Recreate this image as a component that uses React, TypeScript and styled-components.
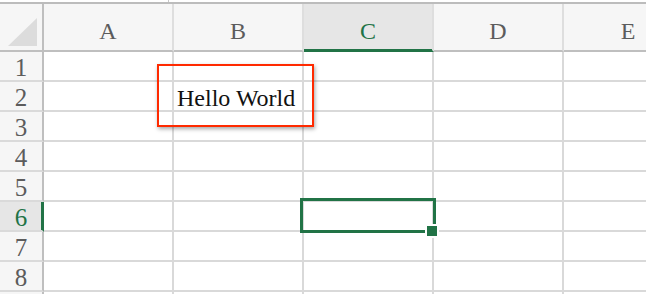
import React from 'react'
import styled, { createGlobalStyle } from 'styled-components'

const GlobalStyle = createGlobalStyle`
  html, body {
    margin: 0;
    padding: 0;
    background: #fff;
    overflow: hidden;
  }
  body {
    font-family: 'Liberation Serif', 'Times New Roman', serif;
  }
`

const Sheet = styled.div`
  position: relative;
  width: 646px;
  height: 294px;
  overflow: hidden;
`

const TopStrip = styled.div`
  height: 2px;
  background: #fff;
  border-bottom: 2px solid #bcbcbc;
  display: flex;

  .tick {
    width: 168px;
    border-right: 1px solid #c8c8c8;
  }
`

const Grid = styled.div`
  display: grid;
  grid-template-columns: 44px repeat(5, 130px);
  grid-template-rows: 48px repeat(9, 30px);
`

const Corner = styled.div`
  box-sizing: border-box;
  background: #f6f6f6;
  border-right: 2px solid #bfbfbf;
  border-bottom: 2px solid #bfbfbf;
  display: flex;
  justify-content: flex-end;
  align-items: flex-end;
  padding: 0 5px 4px 0;
`

const ColHeader = styled.div<{ $active?: boolean }>`
  box-sizing: border-box;
  background: ${(p) => (p.$active ? '#e6e6e6' : '#f6f6f6')};
  border-right: 2px solid #dedede;
  border-bottom: 2px solid ${(p) => (p.$active ? '#217346' : '#bfbfbf')};
  box-shadow: ${(p) => (p.$active ? 'inset 0 -1px 0 #217346' : 'none')};
  color: ${(p) => (p.$active ? '#217346' : '#5c5c5c')};
  font-size: 24px;
  line-height: 1;
  display: flex;
  justify-content: center;
  align-items: flex-end;
  padding-bottom: 7px;
`

const RowHeader = styled.div<{ $active?: boolean }>`
  box-sizing: border-box;
  background: ${(p) => (p.$active ? '#e6e6e6' : '#f6f6f6')};
  border-right: 2px solid ${(p) => (p.$active ? '#217346' : '#bfbfbf')};
  border-bottom: 2px solid #dadada;
  box-shadow: ${(p) => (p.$active ? 'inset -1px 0 0 #217346' : 'none')};
  color: ${(p) => (p.$active ? '#217346' : '#5c5c5c')};
  font-size: 25px;
  line-height: 1;
  display: flex;
  justify-content: center;
  align-items: flex-end;
`

const Cell = styled.div`
  box-sizing: border-box;
  border-right: 2px solid #d9d9d9;
  border-bottom: 2px solid #d9d9d9;
  color: #111;
  font-size: 24px;
  line-height: 1;
  display: flex;
  align-items: flex-end;
  padding-left: 3px;
  white-space: nowrap;
`

const Callout = styled.div`
  position: absolute;
  left: 157px;
  top: 64px;
  width: 157px;
  height: 63px;
  box-sizing: border-box;
  border: 2px solid #ff2a00;
  box-shadow: 1px 2px 4px rgba(0, 0, 0, 0.35);
`

const Selection = styled.div`
  position: absolute;
  left: 300px;
  top: 198px;
  width: 136px;
  height: 35px;
  box-sizing: border-box;
  border: 3px solid #217346;
`

const FillHandle = styled.div`
  position: absolute;
  left: 122px;
  top: 23px;
  width: 14px;
  height: 14px;
  box-sizing: border-box;
  background: #217346;
  border: 2px solid #fff;
`

const columns = ['A', 'B', 'C', 'D', 'E']
// the 9th row only peeks in at the bottom edge, its number is out of view
const rows = [1, 2, 3, 4, 5, 6, 7, 8, 9]
const visibleRows = 8
const values: Record<string, string> = { B2: 'Hello World' }
const activeCol = 'C'
const activeRow = 6

const App = () => {
  return (
    <Sheet>
      <GlobalStyle />
      <TopStrip>
        <div className='tick' />
      </TopStrip>
      <Grid>
        <Corner>
          <svg width='29' height='28' viewBox='0 0 29 28'>
            <polygon points='0,28 29,28 29,0' fill='#dcdcdc' />
          </svg>
        </Corner>
        {columns.map((c) => (
          <ColHeader key={c} $active={c === activeCol}>
            {c}
          </ColHeader>
        ))}
        {rows.map((r) => (
          <React.Fragment key={r}>
            <RowHeader $active={r === activeRow}>
              {r <= visibleRows ? r : ''}
            </RowHeader>
            {columns.map((c) => (
              <Cell key={c + r}>{values[c + r]}</Cell>
            ))}
          </React.Fragment>
        ))}
      </Grid>
      <Callout />
      <Selection>
        <FillHandle />
      </Selection>
    </Sheet>
  )
}

export default App
